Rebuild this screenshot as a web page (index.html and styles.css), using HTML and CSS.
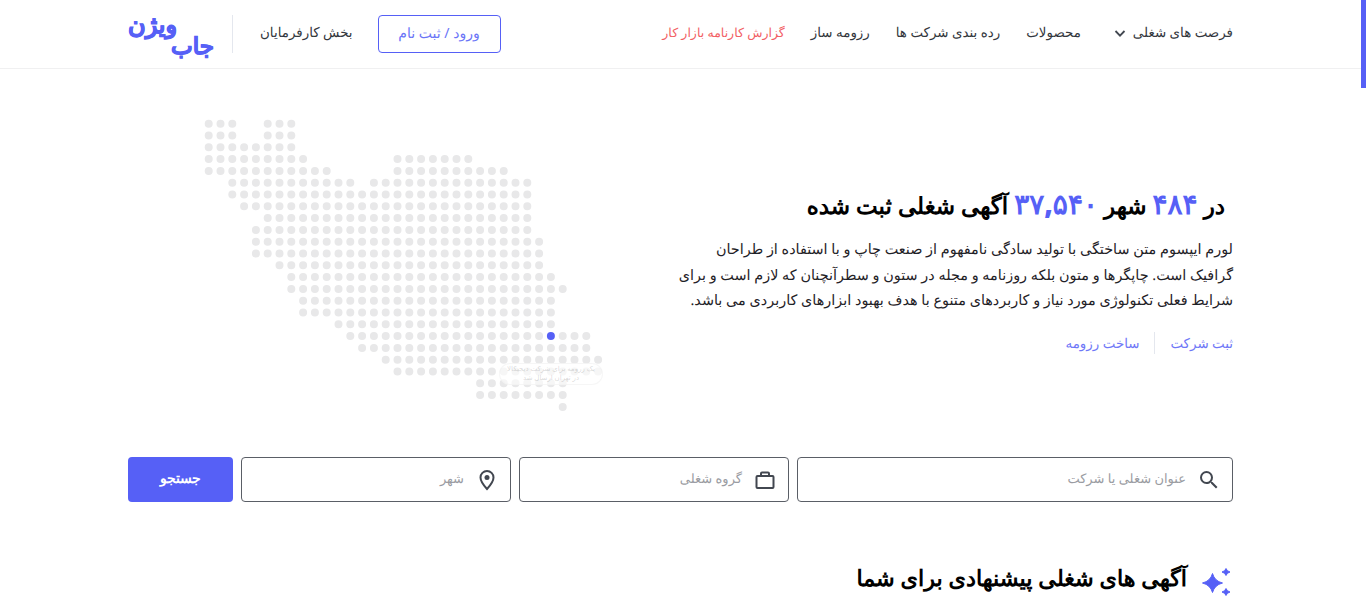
FILE: index.html
```html
<!DOCTYPE html>
<html lang="fa" dir="rtl">
<head>
<meta charset="utf-8">
<title>جاب ویژن</title>
<link rel="stylesheet" href="styles.css">
</head>
<body>
<div class="scroll-thumb"></div>
<header class="site-header">
  <div class="container header-row">
    <nav class="main-nav">
      <a class="nav-link has-caret">فرصت های شغلی
        <svg class="caret" width="14" height="14" viewBox="0 0 14 14"><path d="M2.500 5l4.500 4.600L11.500 5" fill="none" stroke="#424750" stroke-width="1.800"/></svg>
      </a>
      <a class="nav-link">محصولات</a>
      <a class="nav-link">رده بندی شرکت ها</a>
      <a class="nav-link">رزومه ساز</a>
      <a class="nav-link nav-accent">گزارش کارنامه بازار کار</a>
    </nav>
    <div class="header-side">
      <a class="login-btn">ورود / ثبت نام</a>
      <a class="employers">بخش کارفرمایان</a>
      <span class="header-sep"></span>
      <div class="logo"><span class="logo-top">ویژن</span><span class="logo-bottom">جاب</span></div>
    </div>
  </div>
</header>

<main class="container">
  <section class="hero">
    <div class="hero-copy">
      <h1 class="hero-title">در <b>۴۸۴</b> شهر <b>۳۷,۵۴۰</b> آگهی شغلی ثبت شده</h1>
      <p class="hero-text">لورم ایپسوم متن ساختگی با تولید سادگی نامفهوم از صنعت چاپ و با استفاده از طراحان گرافیک است. چاپگرها و متون بلکه روزنامه و مجله در ستون و سطرآنچنان که لازم است و برای شرایط فعلی تکنولوژی مورد نیاز و کاربردهای متنوع با هدف بهبود ابزارهای کاربردی می باشد.</p>
      <div class="hero-links"><a>ثبت شرکت</a><a>ساخت رزومه</a></div>
    </div>
    <div class="map">
      <svg class="map-dots" width="412" height="306" viewBox="0 0 412 306">
        <path class="dots" d="M4.700 11.700H28.500M63.700 11.700H87.500M4.700 23.500H28.500M63.700 23.500H87.500M4.700 35.300H87.500M4.700 47.100H99.300M193.500 47.100H264.500M4.700 58.900H122.900M193.500 58.900H299.900M28.300 70.700H146.500M169.900 70.700H323.500M28.300 82.500H323.500M40.100 94.300H323.500M63.700 106.100H323.500M51.900 117.900H323.500M51.900 129.700H335.300M51.900 141.500H335.300M75.500 153.300H335.300M87.300 165.100H347.100M87.300 176.900H358.900M99.100 188.700H347.100M99.100 200.500H347.100M134.500 212.300H347.100M146.300 224.100H335.300M358.700 224.100H382.500M158.100 235.900H382.500M181.700 247.700H394.300M193.500 259.500H394.300M276.100 271.300H358.900M276.100 283.100H358.900M358.700 294.900H358.900"/>
        <circle class="dot-active" cx="346.900" cy="224.100" r="4"/>
      </svg>
      <div class="map-tip">یک رزومه برای شرکت دیجیکالا<br>در تهران ارسال شد</div>
    </div>
  </section>

  <form class="search">
    <label class="field">
      <svg width="24" height="24" viewBox="0 0 24 24"><path fill="#424750" d="M15.500 14h-.79l-.28-.27A6.470 6.470 0 0 0 16 9.500 6.500 6.500 0 1 0 9.500 16c1.610 0 3.090-.59 4.230-1.570l.27.28v.79l5 4.990L20.490 19l-4.990-5zm-6 0C7.010 14 5 11.990 5 9.500S7.010 5 9.500 5 14 7.010 14 9.500 11.990 14 9.500 14z"/></svg>
      <span class="placeholder">عنوان شغلی یا شرکت</span>
    </label>
    <label class="field">
      <svg width="24" height="24" viewBox="0 0 24 24"><path fill="none" stroke="#424750" stroke-width="2" d="M4.500 8h15a1 1 0 0 1 1 1v10a1 1 0 0 1-1 1h-15a1 1 0 0 1-1-1V9a1 1 0 0 1 1-1zM8 8V5.500a1 1 0 0 1 1-1h6a1 1 0 0 1 1 1V8"/></svg>
      <span class="placeholder">گروه شغلی</span>
    </label>
    <label class="field">
      <svg width="24" height="24" viewBox="0 0 24 24"><path fill="none" stroke="#424750" stroke-width="2" d="M12 3a6.500 6.500 0 0 0-6.500 6.500c0 4.400 6.500 11.500 6.500 11.500s6.500-7.100 6.500-11.500A6.500 6.500 0 0 0 12 3z"/><circle cx="12" cy="9.500" r="2.500" fill="#424750"/></svg>
      <span class="placeholder">شهر</span>
    </label>
    <button class="search-btn" type="button">جستجو</button>
  </form>

  <h2 class="section-title">
    <svg width="32" height="32" viewBox="0 0 32 32"><path fill="#5660f6" stroke="#5660f6" stroke-linejoin="round" d="M11.500 9.500Q13.500 17 21.500 19 13.500 21 11.500 28.500 9.500 21 1.500 19 9.500 17 11.500 9.500zM25 4.500Q25.800 7.200 29 8 25.800 8.800 25 11.500 24.200 8.800 21 8 24.200 7.200 25 4.500zM25 24.500Q25.800 27.200 29 28 25.800 28.800 25 31.500 24.200 28.800 21 28 24.200 27.200 25 24.500z"/></svg>
    <span class="section-label">آگهی های شغلی پیشنهادی برای شما</span>
  </h2>
</main>
</body>
</html>
```
FILE: styles.css
```css
* { box-sizing: border-box; }
html, body { margin: 0; background: #fff; }
body {
  padding-right: 5px;
  height: 606px;
  overflow: hidden;
  font-family: "Noto Sans", sans-serif;
  font-size: 13.400px;
  text-rendering: geometricPrecision;
  color: #1f2227;
}
a { color: inherit; text-decoration: none; }
.container { width: 1105px; margin: 0 auto; }
.scroll-thumb { position: fixed; top: 0; right: 0; width: 5px; height: 88px; background: #5660f6; }
.site-header { height: 69px; border-bottom: 1px solid #f0f0f1; }
.header-row { height: 68px; display: flex; align-items: center; justify-content: space-between; }
.main-nav { display: flex; align-items: center; gap: 26px; color: #33373d; padding-bottom: 4px; }
.nav-link { display: flex; align-items: center; gap: 6px; white-space: nowrap; }
.nav-accent { color: #f25f65; font-size: 12.500px; }
.caret { margin-inline-end: 6px; margin-top: 2px; }
.header-side { display: flex; align-items: center; }
.login-btn { width: 123px; height: 38px; border: 1px solid #5660f6; border-radius: 4px; color: #6a74f7; font-size: 14px; display: flex; align-items: center; justify-content: center; padding-bottom: 2px; }
.employers { margin-inline-start: 25px; white-space: nowrap; color: #33373d; padding-bottom: 4px; }
.header-sep { width: 1px; height: 38px; background: #e4e7ee; margin-inline-start: 27px; margin-inline-end: 18px; }
.logo { width: 86px; height: 38px; display: flex; flex-direction: column; color: #5660f6; font-weight: 700; line-height: 20px; -webkit-text-stroke: .8px #5660f6; }
.logo-top { align-self: flex-end; height: 19px; font-size: 24px; }
.logo-bottom { align-self: flex-start; font-size: 23px; line-height: 22px; }
.hero { display: flex; justify-content: space-between; }
.hero-copy { width: 560px; padding-top: 118px; }
.hero-title { margin: 0; padding-right: 8px; font-size: 23px; font-weight: 700; line-height: 34px; color: #000; white-space: nowrap; }
.hero-title b { color: #5660f6; font-size: 28px; letter-spacing: 1px; line-height: 34px; }
.hero-text { margin: 15px 0 0; font-size: 14.400px; line-height: 25.500px; color: #1f2227; }
.hero-links { display: flex; margin-top: 18px; color: #6f78f7; font-size: 13.400px; }
.hero-links a { line-height: 22px; }
.hero-links a + a { border-right: 1px solid #e4e7ee; margin-right: 15px; padding-right: 15px; }
.map { position: relative; width: 412px; height: 306px; margin-top: 43px; margin-left: 76px; }
.map-dots { display: block; }
.dots { fill: none; stroke: #e8e8e9; stroke-width: 8; stroke-linecap: round; stroke-dasharray: 0 11.800; }
.dot-active { fill: #5660f6; }
.map-tip { position: absolute; left: 295px; top: 251px; width: 104px; height: 22px; border: 1px solid rgba(240, 240, 240, .6); border-radius: 11px; background: rgba(255, 255, 255, .6); color: rgba(130, 130, 130, .3); font-size: 7px; line-height: 9px; text-align: center; padding: 1px 4px; white-space: nowrap; }
.search { display: grid; grid-template-columns: 436px 270px 270px 105px; gap: 8px; margin-top: 39px; }
.field { height: 45px; border: 1px solid #5a5e66; border-radius: 4px; display: flex; align-items: center; gap: 11px; padding: 0 11px; }
.placeholder { color: #9a9ca2; font-size: 13px; padding-bottom: 4px; }
.search-btn { height: 45px; border: 0; border-radius: 4px; background: #5660f6; color: #fff; font: 700 14px "Noto Sans", sans-serif; padding: 0 0 4px; }
.section-title { display: flex; align-items: center; gap: 14px; margin: 60px 0 0; font-size: 22.300px; font-weight: 700; color: #000; }
.section-label { margin-bottom: 4px; }
```
